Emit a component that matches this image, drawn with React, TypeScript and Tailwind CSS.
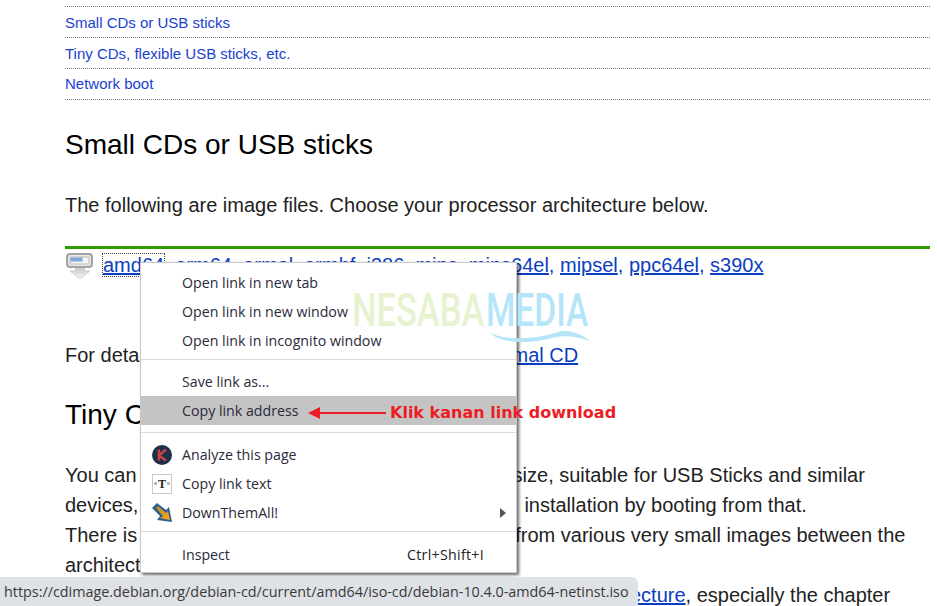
const arches = ["arm64", "armel", "armhf", "i386", "mips", "mips64el", "mipsel", "ppc64el", "s390x"];

const DownloadIcon = () => (
  <svg width="28" height="28" viewBox="0 0 28 28" className="shrink-0">
    <defs>
      <linearGradient id="dl" x1="0" y1="0" x2="0" y2="1">
        <stop offset="0" stopColor="#c4c4c4" />
        <stop offset="1" stopColor="#f6f6f6" />
      </linearGradient>
    </defs>
    <path d="M9.5 16h9v4h5.5l-10 8-10-8h5.5z" fill="url(#dl)" stroke="#cfcfcf" />
    <rect x="1" y="3" width="25" height="13" rx="3" fill="#e8e8e8" stroke="#a2a2a2" strokeWidth="2" />
    <rect x="4" y="6" width="19" height="7" rx="1" fill="#f4f4f4" stroke="#bcbcbc" />
    <rect x="4.5" y="6.5" width="12" height="4" fill="#7ea6dc" />
  </svg>
);

const KIcon = () => (
  <svg width="20" height="20" viewBox="0 0 20 20">
    <circle cx="10" cy="10" r="10" fill="#1f3148" />
    <path d="M7 4.5v11M14 4.5l-7 6 7 5" fill="none" stroke="#c8424a" strokeWidth="2.4" />
  </svg>
);

const TextIcon = () => (
  <div className="flex h-5 w-5 items-center justify-center gap-px border border-[#c8c8c8] bg-white font-['Liberation_Serif',serif] text-[12px] font-bold leading-none text-[#222]">
    <span className="h-[3px] w-[3px] bg-[#bbb]" />T<span className="h-[3px] w-[3px] bg-[#bbb]" />
  </div>
);

const DtaIcon = () => (
  <svg width="21" height="20" viewBox="0 0 21 20">
    <defs>
      <linearGradient id="dta" x1="0" y1="0" x2="1" y2="1">
        <stop offset="0" stopColor="#b98a2a" />
        <stop offset="1" stopColor="#f5a91d" />
      </linearGradient>
    </defs>
    <path d="M0 5l5-5 9 7 3-3 3 15-15-2 3-4z" fill="#2f5f8f" />
    <path d="M4 5l2-2 8 7 2-2 2 9-10-2 3-2z" fill="url(#dta)" />
  </svg>
);

const Sep = ({ className }: { className: string }) => <div className={`h-px bg-[#dcdcdc] ${className}`} />;

const Item = ({ label, icon, active, shortcut, arrow }: { label: string; icon?: React.ReactNode; active?: boolean; shortcut?: string; arrow?: boolean }) => (
  <div className={`flex h-[29px] items-center ${active ? "bg-[#c4c4c4]" : ""}`}>
    <div className="flex w-[41px] justify-center pl-[1px]">{icon}</div>
    <span>{label}</span>
    {shortcut && <span className="ml-auto mr-[32px] tracking-[0.3px] text-[#222]">{shortcut}</span>}
    {arrow && <span className="ml-auto mr-[10px] h-0 w-0 border-y-[5px] border-l-[6px] border-y-transparent border-l-[#555]" />}
  </div>
);

const ContextMenu = () => (
  <div className="absolute left-[140px] top-[262px] h-[311px] w-[377px] border border-[#c9c9c9] bg-white py-[5px] font-['Open_Sans',sans-serif] text-[14.2px] text-[#2a2a3a] shadow-[2px_2px_3px_rgba(0,0,0,0.6)]">
    <Item label="Open link in new tab" />
    <Item label="Open link in new window" />
    <Item label="Open link in incognito window" />
    <Sep className="mb-[7px] mt-[4px]" />
    <Item label="Save link as..." />
    <Item label="Copy link address" active />
    <Sep className="mb-[7px] mt-[7px]" />
    <Item label="Analyze this page" icon={<KIcon />} />
    <Item label="Copy link text" icon={<TextIcon />} />
    <Item label="DownThemAll!" icon={<DtaIcon />} arrow />
    <Sep className="mb-[8px] mt-[4px]" />
    <Item label="Inspect" shortcut="Ctrl+Shift+I" />
  </div>
);

const Watermark = () => (
  <div className="pointer-events-none absolute left-[352px] top-[287px] flex w-[240px] font-['Roboto',sans-serif] text-[46px] font-medium leading-[46px]">
    <span className="origin-left scale-x-[0.75] text-[#e6f2d0]">NESABA</span>
    <span className="ml-[-43px] origin-left scale-x-[0.73] text-[#b5e5f9]">MEDIA</span>
    <svg width="100" height="14" viewBox="0 0 100 14" className="absolute left-[138px] top-[42px]">
      <path d="M0 4C20 13 50 9 68 3c10-3 22 1 32 9C85 7 75 6 62 9 40 15 12 15 0 4z" fill="#b5e5f9" />
    </svg>
  </div>
);

const Annotation = () => (
  <div className="absolute left-[308px] top-[402px] flex h-[22px] items-center">
    <svg width="78" height="12" viewBox="0 0 78 12" className="block">
      <path d="M0 6l12-6v5h66v2H12v5z" fill="#ed1c24" />
    </svg>
    <span className="ml-[4px] whitespace-nowrap font-['DejaVu_Sans',sans-serif] text-[16px] font-bold text-[#ed1c24]">Klik kanan link download</span>
  </div>
);

const TocRow = ({ label, className }: { label: string; className?: string }) => (
  <div className={`flex h-[31px] items-center border-b border-dotted border-[#777] ${className ?? ""}`}>
    <span className="text-[#1a3fd0]">{label}</span>
  </div>
);

export default function App() {
  return (
    <div className="relative h-[606px] w-[937px] overflow-hidden bg-white font-['Liberation_Sans',sans-serif] text-[20px] leading-[30px] text-[#222]">
      <div className="pl-[65px] pr-[7px] pt-[6px]">
        <div className="border-t border-dotted border-[#777] text-[15px]">
          <TocRow label="Small CDs or USB sticks" className="pt-[2px]" />
          <TocRow label="Tiny CDs, flexible USB sticks, etc." className="pt-[2px]" />
          <TocRow label="Network boot" />
        </div>

        <h2 className="mt-[27px] text-[28px] leading-[36px] text-black">Small CDs or USB sticks</h2>
        <p className="mt-[27px]">The following are image files. Choose your processor architecture below.</p>

        <div className="mt-[26px] h-[3px] bg-[#2e9a00]" />
        <div className="mt-[1px] flex h-[30px] items-center">
          <div className="ml-px"><DownloadIcon /></div>
          <div className="ml-[9px] whitespace-nowrap text-[#0b3ec0]">
            <a className="underline outline-1 outline-dotted outline-[#444]">amd64</a>
            {arches.map((a) => (
              <span key={a}>
                , <a className="underline">{a}</a>
              </span>
            ))}
          </div>
        </div>

        <div className="mt-[60px] flex">
          <span>For deta</span>
          <a className="ml-[372px] text-[#0b3ec0] underline">mal CD</a>
        </div>

        <h2 className="mt-[27px] text-[28px] leading-[36px] text-black">Tiny C</h2>

        <div className="mt-[27px] flex whitespace-nowrap">
          <span>You can</span>
          <span className="ml-[376px]">size, suitable for USB Sticks and similar</span>
        </div>
        <div className="flex whitespace-nowrap">
          <span>devices,</span>
          <span className="ml-[386px]">installation by booting from that.</span>
        </div>
        <div className="flex whitespace-nowrap">
          <span>There is</span>
          <span className="ml-[378px]">from various very small images between the</span>
        </div>
        <div>architect</div>
        <div className="flex whitespace-nowrap">
          <a className="ml-[565px] text-[#0b3ec0] underline">ecture</a>
          <span>, especially the chapter</span>
        </div>
      </div>

      <ContextMenu />
      <Annotation />
      <Watermark />

      <div className="absolute bottom-0 left-0 flex h-[29px] w-[638px] items-center rounded-tr-[6px] bg-[#dee1e6] pl-[4px] font-['Open_Sans',sans-serif] text-[14.35px] whitespace-nowrap text-[#3a3a3a]">
        https://cdimage.debian.org/debian-cd/current/amd64/iso-cd/debian-10.4.0-amd64-netinst.iso
      </div>
    </div>
  );
}
